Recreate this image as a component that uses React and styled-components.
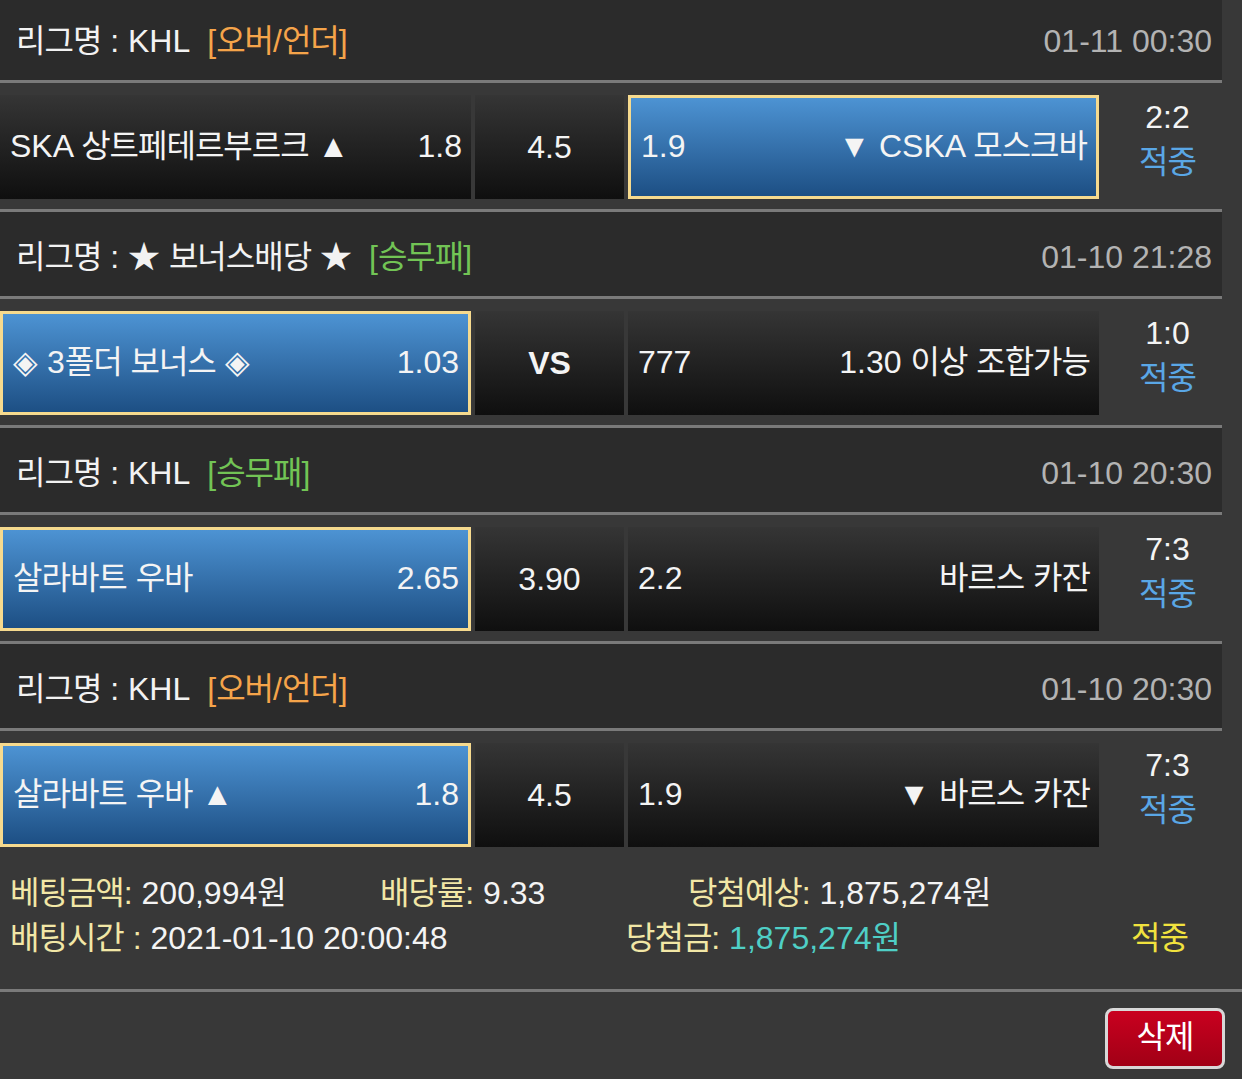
import styled, { createGlobalStyle } from 'styled-components'

const GlobalStyle = createGlobalStyle`
  html, body {
    margin: 0;
    padding: 0;
    background: #383838;
  }
  body {
    font-family: "Liberation Sans", Arial, "Noto Sans CJK KR", sans-serif;
    color: #f2f2f2;
    min-height: 100vh;
  }
`

const games = [
  {
    league: '리그명 : KHL',
    tag: '[오버/언더]',
    tagColor: '#f5a44a',
    date: '01-11 00:30',
    home: 'SKA 상트페테르부르크 ▲',
    homeOdds: '1.8',
    draw: '4.5',
    awayOdds: '1.9',
    away: '▼ CSKA 모스크바',
    pick: 'away',
    score: '2:2',
  },
  {
    league: '리그명 : ★ 보너스배당 ★',
    tag: '[승무패]',
    tagColor: '#72c455',
    date: '01-10 21:28',
    home: '◈ 3폴더 보너스 ◈',
    homeOdds: '1.03',
    draw: 'VS',
    awayOdds: '777',
    away: '1.30 이상 조합가능',
    pick: 'home',
    score: '1:0',
  },
  {
    league: '리그명 : KHL',
    tag: '[승무패]',
    tagColor: '#72c455',
    date: '01-10 20:30',
    home: '살라바트 우바',
    homeOdds: '2.65',
    draw: '3.90',
    awayOdds: '2.2',
    away: '바르스 카잔',
    pick: 'home',
    score: '7:3',
  },
  {
    league: '리그명 : KHL',
    tag: '[오버/언더]',
    tagColor: '#f5a44a',
    date: '01-10 20:30',
    home: '살라바트 우바 ▲',
    homeOdds: '1.8',
    draw: '4.5',
    awayOdds: '1.9',
    away: '▼ 바르스 카잔',
    pick: 'home',
    score: '7:3',
  },
]

// Hangul glyphs of the fallback font are a little wider than the original ones,
// so runs of Hangul get a slightly tighter spacing.
function ko(text) {
  return text
    .split(/([\uAC00-\uD7A3]+)/)
    .map((part, i) => (/[\uAC00-\uD7A3]/.test(part) ? <Ko key={i}>{part}</Ko> : part))
}

export default function App() {
  return (
    <Page>
      <GlobalStyle />
      <List>
        {games.map((g, i) => (
          <Group key={i}>
            <LeagueBar>
              <LeagueName>
                {ko(g.league)}
                <Tag color={g.tagColor}>{ko(g.tag)}</Tag>
              </LeagueName>
              <DateText>{g.date}</DateText>
            </LeagueBar>
            <BetRow last={i === games.length - 1}>
              <TeamCell picked={g.pick === 'home'}>
                <span>{ko(g.home)}</span>
                <span>{g.homeOdds}</span>
              </TeamCell>
              <DrawCell bold={g.draw === 'VS'}>{g.draw}</DrawCell>
              <TeamCell picked={g.pick === 'away'}>
                <span>{g.awayOdds}</span>
                <span>{ko(g.away)}</span>
              </TeamCell>
              <ScoreCol>
                <Score>{g.score}</Score>
                <Result>
                  <Ko>적중</Ko>
                </Result>
              </ScoreCol>
            </BetRow>
          </Group>
        ))}
      </List>
      <Summary>
        <SummaryLine>
          <Item width="370px">
            <Label>{ko('베팅금액:')}</Label> 200,994{ko('원')}
          </Item>
          <Item width="308px">
            <Label>{ko('배당률:')}</Label> 9.33
          </Item>
          <Item>
            <Label>{ko('당첨예상:')}</Label> 1,875,274{ko('원')}
          </Item>
        </SummaryLine>
        <SummaryLine>
          <Item width="616px">
            <Label>{ko('배팅시간 :')}</Label> 2021-01-10 20:00:48
          </Item>
          <Item width="505px">
            <Label>{ko('당첨금:')}</Label> <Win>1,875,274{ko('원')}</Win>
          </Item>
          <Item>
            <Hit>
              <Ko>적중</Ko>
            </Hit>
          </Item>
        </SummaryLine>
      </Summary>
      <Actions>
        <DeleteButton>
          <Ko>삭제</Ko>
        </DeleteButton>
      </Actions>
    </Page>
  )
}

const Ko = styled.span`
  letter-spacing: -1px;
`

const Page = styled.div`
  width: 1242px;
  overflow: hidden;
`

const List = styled.div`
  width: 1222px;
  margin-top: -4px;
`

const Group = styled.section``

const LeagueBar = styled.div`
  box-sizing: content-box;
  height: 78px;
  padding: 6px 10px 0 16px;
  display: flex;
  align-items: center;
  justify-content: space-between;
  background: #2b2b2b;
  border-bottom: 3px solid #7a7a7a;
  font-size: 32px;
  line-height: 1;
`

const LeagueName = styled.div`
  color: #f2f2f2;
  white-space: nowrap;
`

const Tag = styled.span`
  color: ${({ color }) => color};
  margin-left: 17px;
`

const DateText = styled.div`
  color: #b3b3b3;
`

const BetRow = styled.div`
  height: 104px;
  padding: 12px 0 10px;
  display: grid;
  grid-template-columns: 471px 149px 471px 1fr;
  column-gap: 4px;
  border-bottom: ${({ last }) => (last ? 'none' : '3px solid #7a7a7a')};
`

const TeamCell = styled.div`
  box-sizing: border-box;
  display: flex;
  align-items: center;
  justify-content: space-between;
  padding: 0 9px 3px 10px;
  font-size: 32px;
  line-height: 1;
  color: #f4f4f4;
  white-space: nowrap;
  background: ${({ picked }) =>
    picked
      ? 'linear-gradient(#4d93d3, #1d4f84)'
      : 'linear-gradient(#353535, #0f0f0f)'};
  border: ${({ picked }) => (picked ? '3px solid #f6da8e' : 'none')};
`

const DrawCell = styled.div`
  display: flex;
  align-items: center;
  justify-content: center;
  font-size: 32px;
  line-height: 1;
  font-weight: ${({ bold }) => (bold ? 700 : 400)};
  color: #f4f4f4;
  background: linear-gradient(#353535, #0f0f0f);
`

const ScoreCol = styled.div`
  margin-left: -4px;
  padding-left: 14px;
  display: flex;
  flex-direction: column;
  align-items: center;
  font-size: 32px;
  line-height: 45px;
`

const Score = styled.div`
  color: #f4f4f4;
`

const Result = styled.div`
  color: #5aa7e6;
`

const Summary = styled.div`
  padding: 14px 0 28px 10px;
  border-bottom: 3px solid #7a7a7a;
  font-size: 32px;
  line-height: 45px;
`

const SummaryLine = styled.div`
  display: flex;
  white-space: nowrap;
`

const Item = styled.div`
  width: ${({ width }) => width || 'auto'};
  color: #f4f4f4;
`

const Label = styled.span`
  color: #f2e7a6;
`

const Win = styled.span`
  color: #4fcfc6;
`

const Hit = styled.span`
  color: #f1e23e;
`

const Actions = styled.div`
  display: flex;
  justify-content: flex-end;
  padding: 16px 17px;
`

const DeleteButton = styled.button`
  width: 120px;
  height: 61px;
  box-sizing: border-box;
  border: 3px solid #d8d8d8;
  border-radius: 8px;
  background: linear-gradient(#c9001f, #a10016);
  color: #ffffff;
  font-family: inherit;
  font-size: 32px;
  line-height: 1;
  padding: 0 0 4px;
  cursor: pointer;
`
